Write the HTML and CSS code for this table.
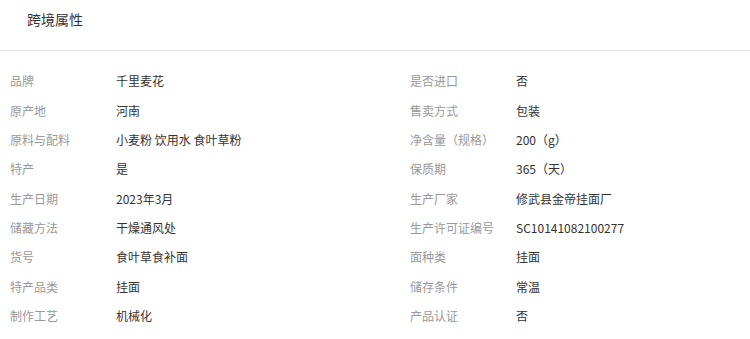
FILE: index.html
```html
<!DOCTYPE html>
<html lang="zh-CN">
<head>
<meta charset="utf-8">
<title>跨境属性</title>
<link rel="stylesheet" href="styles.css">
</head>
<body>
<div class="panel">
  <div class="panel-head">跨境属性</div>
  <div class="attr-grid">
    <div class="attr"><span class="attr-label">品牌</span><span class="attr-value">千里麦花</span></div>
    <div class="attr"><span class="attr-label">是否进口</span><span class="attr-value">否</span></div>
    <div class="attr"><span class="attr-label">原产地</span><span class="attr-value">河南</span></div>
    <div class="attr"><span class="attr-label">售卖方式</span><span class="attr-value">包装</span></div>
    <div class="attr"><span class="attr-label">原料与配料</span><span class="attr-value">小麦粉 饮用水 食叶草粉</span></div>
    <div class="attr"><span class="attr-label">净含量（规格）</span><span class="attr-value">200（g）</span></div>
    <div class="attr"><span class="attr-label">特产</span><span class="attr-value">是</span></div>
    <div class="attr"><span class="attr-label">保质期</span><span class="attr-value">365（天）</span></div>
    <div class="attr"><span class="attr-label">生产日期</span><span class="attr-value">2023年3月</span></div>
    <div class="attr"><span class="attr-label">生产厂家</span><span class="attr-value">修武县金帝挂面厂</span></div>
    <div class="attr"><span class="attr-label">储藏方法</span><span class="attr-value">干燥通风处</span></div>
    <div class="attr"><span class="attr-label">生产许可证编号</span><span class="attr-value">SC10141082100277</span></div>
    <div class="attr"><span class="attr-label">货号</span><span class="attr-value">食叶草食补面</span></div>
    <div class="attr"><span class="attr-label">面种类</span><span class="attr-value">挂面</span></div>
    <div class="attr"><span class="attr-label">特产品类</span><span class="attr-value">挂面</span></div>
    <div class="attr"><span class="attr-label">储存条件</span><span class="attr-value">常温</span></div>
    <div class="attr"><span class="attr-label">制作工艺</span><span class="attr-value">机械化</span></div>
    <div class="attr"><span class="attr-label">产品认证</span><span class="attr-value">否</span></div>
  </div>
</div>
</body>
</html>
```
FILE: styles.css
```css
html, body {
  margin: 0;
  padding: 0;
  background: #fff;
}
body {
  font-family: "Noto Sans CJK SC", "Liberation Sans", sans-serif;
  color: #333;
  overflow: hidden;
}
.panel {
  width: 750px;
}
.panel-head {
  height: 51px;
  box-sizing: border-box;
  padding: 9px 0 0 27px;
  font-size: 14px;
  line-height: 20px;
  color: #333;
  border-bottom: 1px solid #e8e8e8;
}
.attr-grid {
  display: grid;
  grid-template-columns: 400px 350px;
  grid-auto-rows: 29.375px;
  padding-top: 15px;
}
.attr {
  display: flex;
  align-items: center;
  padding-left: 10px;
  font-size: 12px;
  white-space: nowrap;
  min-width: 0;
}
.attr-label {
  width: 106px;
  flex: none;
  color: #999;
}
.attr-value {
  color: #333;
}
```
